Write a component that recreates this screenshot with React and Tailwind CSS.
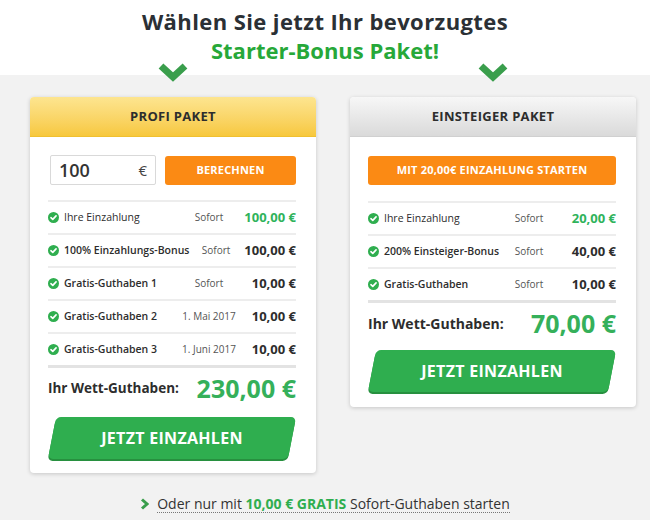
import React from "react";

const font = { fontFamily: '"Open Sans", "Liberation Sans", sans-serif' };

function Check() {
  return (
    <svg width="11" height="11" viewBox="0 0 12 12" className="shrink-0">
      <circle cx="6" cy="6" r="6" fill="#2fae4f" />
      <path d="M3.2 6.2 L5.2 8 L8.8 4.2" stroke="#fff" strokeWidth="1.8" fill="none" strokeLinecap="round" strokeLinejoin="round" />
    </svg>
  );
}

function Chevron() {
  return (
    <svg width="30" height="20" viewBox="0 0 30 20">
      <path d="M3 4 L15 15 L27 4" stroke="#3a9e4c" strokeWidth="7" fill="none" strokeLinejoin="miter" />
    </svg>
  );
}

function Row({ label, when, value, first, bold }) {
  return (
    <div className="flex items-center h-[33px] border-t-2 border-[#ededed]">
      <Check />
      <span className={`ml-[5px] flex-1 whitespace-nowrap text-[10.5px] text-[#2d2d2d] ${bold ? "font-semibold" : ""}`}>{label}</span>
      <span className="w-[58px] whitespace-nowrap text-center text-[10px] text-[#555]">{when}</span>
      <span className={`w-[58px] whitespace-nowrap text-right text-[13px] font-bold ${first ? "text-[#2fb35b]" : "text-[#2d2d2d]"}`}>{value}</span>
    </div>
  );
}

function GreenButton() {
  return (
    <div className="px-[4px]">
      <button className="w-full h-[42px] bg-[#2fae4f] rounded-[5px] skew-x-[-11deg] shadow-[0_2px_0_#27903f]">
        <span className="block skew-x-[11deg] text-white font-bold text-[16px] tracking-[0.3px]">JETZT EINZAHLEN</span>
      </button>
    </div>
  );
}

export default function App() {
  return (
    <div style={font} className="w-[650px] h-[520px] bg-[#f2f2f2] overflow-hidden">
      <div className="bg-white h-[75px] text-center pt-[6px]">
        <h1 className="text-[22px] font-bold text-[#2b3035] leading-[30px] tracking-[0.4px]">Wählen Sie jetzt Ihr bevorzugtes</h1>
        <h2 className="-mt-[1px] text-[22px] font-bold text-[#27a839] leading-[30px]">Starter-Bonus Paket!</h2>
      </div>
      <div className="flex pl-[30px] gap-[34px] -mt-[13px] relative">
        <div className="w-[286px] flex justify-center"><Chevron /></div>
        <div className="w-[286px] flex justify-center"><Chevron /></div>
      </div>

      <div className="flex items-start pl-[30px] gap-[34px] mt-[15px]">
        {/* Profi */}
        <div className="w-[286px] bg-white rounded-[4px] shadow-[0_1px_4px_rgba(0,0,0,0.18)]">
          <div className="h-[40px] rounded-t-[4px] bg-gradient-to-b from-[#fde58f] to-[#f7c83c] flex items-center justify-center border-b border-[#f0c030]">
            <span className="text-[13px] font-bold text-[#2d2d2d] tracking-[0.3px]">PROFI PAKET</span>
          </div>
          <div className="pl-[18px] pr-[20px] pt-[18px] pb-[14px]">
            <div className="flex gap-[9px] items-center">
              <div className="ml-[2px] w-[106px] h-[30px] border border-[#d9d9d9] rounded-[2px] flex items-center justify-between pl-[8px] pr-[8px]">
                <span className="text-[18px] font-semibold text-[#333]">100</span>
                <span className="text-[15px] text-[#444]">€</span>
              </div>
              <button className="flex-1 h-[29px] bg-[#fb8a14] rounded-[3px] text-white text-[11px] font-bold tracking-[0.2px]">BERECHNEN</button>
            </div>
            <div className="mt-[15px]">
              <Row label="Ihre Einzahlung" when="Sofort" value="100,00 €" first />
              <Row label="100% Einzahlungs-Bonus" when="Sofort" value="100,00 €" bold />
              <Row label="Gratis-Guthaben 1" when="Sofort" value="10,00 €" bold />
              <Row label="Gratis-Guthaben 2" when="1. Mai 2017" value="10,00 €" bold />
              <Row label="Gratis-Guthaben 3" when="1. Juni 2017" value="10,00 €" bold />
            </div>
            <div className="border-t-[3px] border-[#e3e3e3] flex items-center justify-between h-[44px]">
              <span className="text-[13.5px] font-bold text-[#2d2d2d]">Ihr Wett-Guthaben:</span>
              <span className="text-[25px] font-bold text-[#35b05a]">230,00 €</span>
            </div>
            <div className="mt-[8px]">
              <GreenButton />
            </div>
          </div>
        </div>

        {/* Einsteiger */}
        <div className="w-[286px] bg-white rounded-[4px] shadow-[0_1px_4px_rgba(0,0,0,0.18)]">
          <div className="h-[40px] rounded-t-[4px] bg-gradient-to-b from-[#f7f7f7] to-[#dadada] flex items-center justify-center border-b border-[#d0d0d0]">
            <span className="text-[13px] font-bold text-[#2d2d2d] tracking-[0.3px]">EINSTEIGER PAKET</span>
          </div>
          <div className="pl-[18px] pr-[20px] pt-[18px] pb-[15px]">
            <button className="w-full h-[29px] mt-[1px] bg-[#fb8a14] rounded-[3px] text-white text-[11px] font-bold tracking-[0.2px]">MIT 20,00€ EINZAHLUNG STARTEN</button>
            <div className="mt-[16px]">
              <Row label="Ihre Einzahlung" when="Sofort" value="20,00 €" first />
              <Row label="200% Einsteiger-Bonus" when="Sofort" value="40,00 €" bold />
              <Row label="Gratis-Guthaben" when="Sofort" value="10,00 €" bold />
            </div>
            <div className="border-t-[3px] border-[#e3e3e3] flex items-center justify-between h-[44px]">
              <span className="text-[14px] font-bold text-[#2d2d2d]">Ihr Wett-Guthaben:</span>
              <span className="text-[25px] font-bold text-[#35b05a]">70,00 €</span>
            </div>
            <div className="mt-[6px]">
              <GreenButton />
            </div>
          </div>
        </div>
      </div>

      <div className="flex justify-center mt-[22px]">
        <a className="flex items-center gap-[8px] text-[14px] text-[#333]">
          <svg width="9" height="12" viewBox="0 0 9 12">
            <path d="M2 1.5 L7 6 L2 10.5" stroke="#3a9e4c" strokeWidth="3" fill="none" />
          </svg>
          <span className="border-b border-dotted border-[#777] leading-[17px]">
            Oder nur mit <b className="text-[#2fae4f]">10,00 € GRATIS</b> Sofort-Guthaben starten
          </span>
        </a>
      </div>
    </div>
  );
}
